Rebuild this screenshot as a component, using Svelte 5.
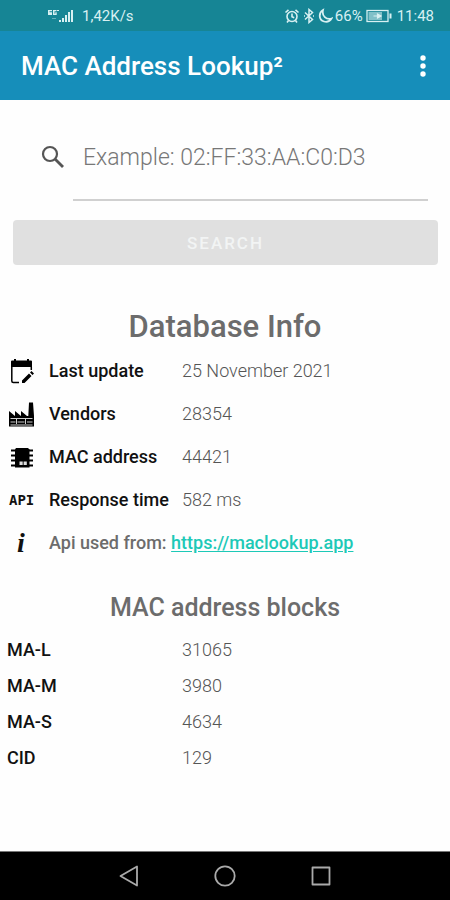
<script lang="ts">
	let query = $state('');

	const blocks = [
		{ name: 'MA-L', count: 31065 },
		{ name: 'MA-M', count: 3980 },
		{ name: 'MA-S', count: 4634 },
		{ name: 'CID', count: 129 }
	];
</script>

<div class="screen">
	<div class="status">
		<div class="group">
			<svg width="26" height="14" viewBox="0 0 26 14" fill="currentColor" aria-hidden="true">
				<path d="M0 1h4v1.3H1.5v1H4V6H0zM5 1h3.5v1.2h-2v2.5h.8V3.3h1.4V6H5zM9 1h2v1h-2z" />
				<path d="M4 9h4v1H4z" opacity=".4" />
				<path d="M11 11h2v2h-2zM14 9h2v4h-2zM17 6h2v7h-2zM20 3h2v10h-2zM23 1h2v12h-2z" />
			</svg>
			<span>1,42K/s</span>
		</div>
		<div class="group right">
			<svg width="16" height="16" viewBox="0 0 16 16" fill="none" stroke="currentColor" stroke-width="1.6" aria-hidden="true">
				<circle cx="8" cy="8.5" r="5" />
				<path d="M8 5.5v3.3l2.2 1M1.5 4.5l3-2.7M14.5 4.5l-3-2.7M4.5 12.5L3 14.5M11.5 12.5l1.5 2" />
			</svg>
			<svg width="14" height="16" viewBox="0 0 14 16" fill="none" stroke="currentColor" stroke-width="1.5" aria-hidden="true">
				<path d="M3 4.5l7.5 7L7 14.5v-13l3.5 3L3 11.5" />
				<path d="M2 8h1M11 8h1" />
			</svg>
			<svg width="15" height="16" viewBox="0 0 15 16" fill="none" stroke="currentColor" stroke-width="1.8" aria-hidden="true">
				<path d="M5 2C.5 4.5.5 12 6 13.5c3 .8 6-.5 7.5-3C8.5 12 3.5 8 5 2z" />
			</svg>
			<span>66%</span>
			<svg class="battery" width="26" height="14" viewBox="0 0 26 14" aria-hidden="true">
				<rect x="1" y="1.5" width="21" height="11" fill="none" stroke="currentColor" stroke-width="1.3" />
				<path d="M2.5 3H16v8H2.5z" fill="currentColor" opacity=".55" />
				<path d="M7.5 7h7M11.5 5v4L15 7z" stroke="currentColor" stroke-width="1.2" fill="currentColor" />
				<path d="M23.5 4.5h2v5h-2z" fill="currentColor" />
			</svg>
			<span>11:48</span>
		</div>
	</div>

	<header>
		<h1>MAC Address Lookup²</h1>
		<button class="more" aria-label="More options">
			<svg width="8" height="24" viewBox="0 0 8 24" fill="currentColor">
				<circle cx="4" cy="4" r="2.7" />
				<circle cx="4" cy="12" r="2.7" />
				<circle cx="4" cy="20" r="2.7" />
			</svg>
		</button>
	</header>

	<main>
		<form onsubmit={(e) => e.preventDefault()}>
			<div class="search">
				<label for="mac" aria-label="MAC address">
					<svg width="24" height="24" viewBox="0 0 24 24" fill="none" stroke="#555" stroke-width="2.2">
						<circle cx="9" cy="9" r="7" />
						<path d="M14 14l8 8" stroke-width="2.8" />
					</svg>
				</label>
				<input id="mac" type="text" placeholder="Example: 02:FF:33:AA:C0:D3" bind:value={query} />
			</div>
			<button class="submit" disabled={!query}>SEARCH</button>
		</form>

		<h2>Database Info</h2>
		<table class="info">
			<tbody>
				<tr>
					<td class="icon">
						<svg width="26" height="26" viewBox="0 0 26 26" aria-hidden="true">
							<path d="M2 3.5q0-1 1-1h2V1h2v1.500h11V1h2v1.500h2q1 0 1 1V9H2z" />
							<path d="M2.800 9v14q0 1.500 1.500 1.500H10M22.300 9v3" fill="none" stroke="#000" stroke-width="1.500" />
							<path d="M13 22.500l7-7 2.500 2.500-7 7H13zM21 14.500l1.500-1.500 2.500 2.500-1.500 1.500z" />
						</svg>
					</td>
					<th scope="row">Last update</th>
					<td>25 November 2021</td>
				</tr>
				<tr>
					<td class="icon">
						<svg width="26" height="26" viewBox="0 0 26 26" aria-hidden="true">
							<path d="M0 25.500V10l6 5v-5l6 5v-5l6 5h1.300L20 1.500h4L25 15v10.500z" />
							<path d="M1.500 17.500h22M1.500 21h5M8.500 21h7M18 21h5.500M7.500 18v5M16.500 18v5M1.500 24h22" stroke="#ccc" stroke-width="1" />
						</svg>
					</td>
					<th scope="row">Vendors</th>
					<td>28354</td>
				</tr>
				<tr>
					<td class="icon">
						<svg width="26" height="26" viewBox="0 0 26 26" aria-hidden="true">
							<path d="M7 4h12l1.500 1.500v18H6v-18z" />
							<path d="M2 6.500h22M2 11.500h22M2 16.500h22M2 21.500h22" stroke="#000" stroke-width="2" />
							<path d="M10.500 17.500h3.200v3.500h-3.200zM14.600 17.500h3.200v3.500h-3.200z" fill="#ddd" />
						</svg>
					</td>
					<th scope="row">MAC address</th>
					<td>44421</td>
				</tr>
				<tr>
					<td class="icon api">API</td>
					<th scope="row">Response time</th>
					<td>582 ms</td>
				</tr>
				<tr>
					<td class="icon letter">i</td>
					<td class="source" colspan="2">Api used from: <a href="https://maclookup.app">https://maclookup.app</a></td>
				</tr>
			</tbody>
		</table>

		<h3>MAC address blocks</h3>
		<table class="blocks">
			<tbody>
				{#each blocks as block}
					<tr>
						<th scope="row">{block.name}</th>
						<td>{block.count}</td>
					</tr>
				{/each}
			</tbody>
		</table>
	</main>

	<nav>
		<button aria-label="Back">
			<svg width="24" height="24" viewBox="0 0 24 24"><path d="M20 2.500v19L3.500 12z" /></svg>
		</button>
		<button aria-label="Home">
			<svg width="24" height="24" viewBox="0 0 24 24"><circle cx="12" cy="12" r="9.7" /></svg>
		</button>
		<button aria-label="Recent apps">
			<svg width="24" height="24" viewBox="0 0 24 24"><path d="M3.500 3.500h17v17h-17z" /></svg>
		</button>
	</nav>
</div>

<style>
	:global(body) {
		margin: 0;
		background: #fefefe;
		font-family: Roboto, 'Liberation Sans', sans-serif;
	}

	.screen {
		display: flex;
		flex-direction: column;
		min-height: 100vh;
	}

	button {
		border: 0;
		padding: 0;
		background: none;
		color: inherit;
		font-family: inherit;
	}

	.status {
		display: flex;
		justify-content: space-between;
		align-items: center;
		height: 31px;
		padding: 0 16px 0 48px;
		background: #168595;
		color: #d8f0f2;
		font-size: 15px;
	}

	.group {
		display: flex;
		align-items: center;
		gap: 8px;
	}

	.group.right {
		gap: 2px;
	}

	.battery {
		margin: 0 3px 0 1px;
	}

	header {
		display: flex;
		justify-content: space-between;
		align-items: center;
		height: 69px;
		padding: 0 23px 0 21px;
		background: #168eba;
		color: #fff;
	}

	h1 {
		margin: 0;
		font-size: 26px;
		font-weight: 500;
	}

	.more,
	label,
	svg {
		display: block;
	}

	main {
		flex: 1;
	}

	form {
		padding: 20px 12px 0 13px;
	}

	.search {
		display: flex;
		align-items: center;
		gap: 8px;
		padding: 0 10px 0 28px;
	}

	input {
		flex: 1;
		box-sizing: border-box;
		min-width: 0;
		height: 81px;
		padding: 0 10px 5px;
		border: 0;
		border-bottom: 2px solid #d0d0d0;
		outline: 0;
		background: none;
		font: 300 23px Roboto, sans-serif;
		color: #333;
	}

	input::placeholder {
		color: #777;
		opacity: 1;
	}

	label {
		padding-bottom: 8px;
	}

	.submit {
		display: block;
		width: 100%;
		height: 45px;
		margin-top: 19px;
		border-radius: 4px;
		background: #e0e0e0;
		color: #f2f4f4;
		font-size: 17px;
		font-weight: 500;
		letter-spacing: 2px;
	}

	h2,
	h3 {
		margin: 0;
		text-align: center;
		font-weight: 500;
		color: #6c6c6c;
	}

	h2 {
		padding-top: 42px;
		font-size: 31px;
		line-height: 40px;
	}

	h3 {
		padding-top: 28px;
		font-size: 25px;
		line-height: 32px;
	}

	table {
		width: 100%;
		border-collapse: collapse;
		table-layout: fixed;
		font-size: 18px;
	}

	.info {
		margin-top: 2px;
	}

	.blocks {
		margin-top: 7px;
	}

	tr {
		height: 43px;
	}

	.blocks tr {
		height: 36px;
	}

	th,
	td {
		padding: 0;
		text-align: left;
	}

	td {
		font-weight: 300;
		color: #555;
	}

	th {
		width: 133px;
		font-weight: 500;
		color: #111;
	}

	.blocks th {
		width: 175px;
		padding-left: 7px;
	}

	.icon {
		width: 40px;
		padding-left: 9px;
		color: #111;
	}

	.api {
		font: 700 14px 'DejaVu Sans Mono', monospace;
	}

	.letter {
		padding-left: 17px;
		font: italic 700 28px 'Liberation Serif', serif;
	}

	.source {
		font-weight: 500;
		color: #6c6c6c;
	}

	a {
		color: #1dc9b7;
		text-underline-offset: 2px;
	}

	nav {
		display: flex;
		justify-content: center;
		align-items: center;
		gap: 72px;
		height: 48px;
		border-top: 1px solid #777;
		background: #000;
	}

	nav svg {
		fill: none;
		stroke: #aaa;
		stroke-width: 1.8;
		stroke-linejoin: round;
	}
</style>
